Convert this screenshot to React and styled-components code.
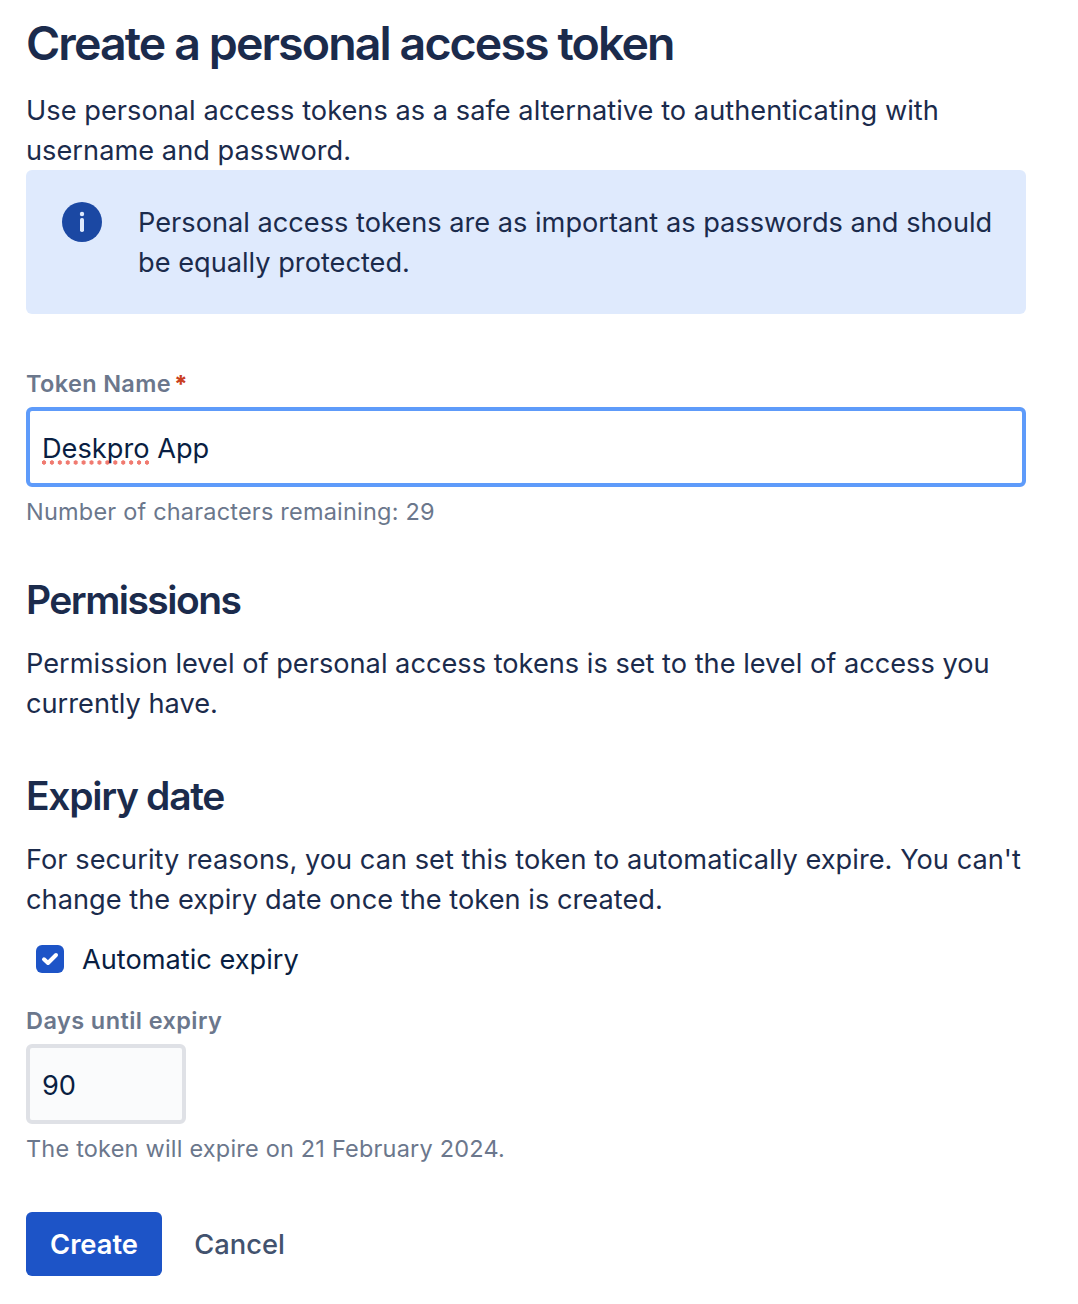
import React from "react";
import styled, { createGlobalStyle } from "styled-components";

const GlobalStyle = createGlobalStyle`
  * { box-sizing: border-box; }
  body {
    margin: 0;
    background: #ffffff;
    color: #1b2b4c;
    font-family: Inter, "Liberation Sans", sans-serif;
    -webkit-font-smoothing: antialiased;
  }
`;

const Page = styled.main`
  width: 1078px;
  min-height: 1304px;
  padding: 15px 26px 28px;
`;

const Form = styled.form`
  width: 1000px;
  display: flex;
  flex-direction: column;
`;

const Title = styled.h1`
  margin: 0 0 19px;
  font-size: 46.5px;
  line-height: 56px;
  font-weight: 600;
  letter-spacing: -1.9px;
  white-space: nowrap;
`;

const SectionTitle = styled.h2`
  margin: 0 0 19px;
  font-size: 39px;
  line-height: 48px;
  font-weight: 600;
  letter-spacing: ${(p) => p.$spacing}px;
`;

const Text = styled.p`
  margin: 0 0 -1px;
  padding-top: 1px;
  font-size: 27.2px;
  line-height: 40px;
  letter-spacing: ${(p) => p.$spacing ?? 0}px;
  white-space: nowrap;
`;

const Banner = styled.section`
  display: flex;
  gap: 36px;
  height: 144px;
  margin-bottom: 54px;
  padding: 32px 36px;
  border-radius: 6px;
  background: #dfeafd;
`;

const Label = styled.label`
  margin: 0 0 7px;
  font-size: 23.5px;
  line-height: 32px;
  font-weight: 600;
  color: #6b778c;
  letter-spacing: ${(p) => p.$spacing}px;
`;

const Required = styled.span`
  margin-left: 3px;
  color: #ca3f21;
  font-weight: 800;
`;

const Field = styled.div`
  display: flex;
  width: ${(p) => p.$width};
  height: 80px;
  padding: 18px 12px 0;
  border: 4px solid ${(p) => (p.$focused ? "#5e9bfa" : "#dfe1e6")};
  border-radius: 6px;
  background: ${(p) => (p.$focused ? "#ffffff" : "#fafbfc")};
  color: #091e42;
  font-size: 27.2px;
  line-height: 40px;
  white-space: pre;
`;

const Misspelled = styled.span`
  height: 40px;
  background: radial-gradient(circle at 2px 2.5px, #f07a70 1.9px, transparent 2.5px) 0 31px / 7.93px 5px repeat-x;
`;

const Helper = styled.p`
  margin: 9px 0 0;
  font-size: 23.5px;
  line-height: 32px;
  color: #6b778c;
  letter-spacing: 0.2px;
`;

const Section = styled.section`
  margin-top: ${(p) => p.$gap}px;
`;

const CheckboxRow = styled.label`
  display: flex;
  align-items: center;
  gap: 18px;
  height: 40px;
  margin: 20px 0 26px;
  padding-left: 10px;
  color: #091e42;
`;

const Actions = styled.div`
  display: flex;
  margin-top: 47px;
`;

const Button = styled.button`
  width: ${(p) => p.$width}px;
  height: 64px;
  padding: 2px 0 0;
  border: 0;
  border-radius: 6px;
  background: ${(p) => (p.$primary ? "#1d54c7" : "transparent")};
  color: ${(p) => (p.$primary ? "#ffffff" : "#42526e")};
  font: ${(p) => (p.$primary ? 600 : 500)} 27.3px/40px Inter, "Liberation Sans", sans-serif;
`;

const Icon = styled.svg`
  flex: none;
  width: ${(p) => p.$size}px;
  height: ${(p) => p.$size}px;
`;

const InfoIcon = () => (
  <Icon $size={40} viewBox="0 0 40 40" aria-hidden="true">
    <circle cx="20" cy="20" r="20" fill="#1b48a3" />
    <circle cx="20" cy="12" r="2.2" fill="#dfeafd" />
    <rect x="18" y="16" width="4" height="14" rx="1.8" fill="#dfeafd" />
  </Icon>
);

const CheckIcon = () => (
  <Icon $size={28} viewBox="0 0 28 28" aria-hidden="true">
    <rect width="28" height="28" rx="6" fill="#1d54c7" />
    <path d="M8 14.3 L12 18 L20 10" fill="none" stroke="#fff" strokeWidth="4" strokeLinecap="round" strokeLinejoin="round" />
  </Icon>
);

export default function App() {
  return (
    <Page>
      <GlobalStyle />
      <Form>
        <Title>Create a personal access token</Title>
        <Text $spacing={0.03}>
          Use personal access tokens as a safe alternative to authenticating with
          <br />
          username and password.
        </Text>
        <Banner>
          <InfoIcon />
          <Text>
            Personal access tokens are as important as passwords and should
            <br />
            be equally protected.
          </Text>
        </Banner>

        <Label $spacing={0.35}>
          Token Name<Required>*</Required>
        </Label>
        <Field $width="100%" $focused>
          <Misspelled>Deskpro</Misspelled> App
        </Field>
        <Helper>Number of characters remaining: 29</Helper>

        <Section $gap={48}>
          <SectionTitle $spacing={-1.53}>Permissions</SectionTitle>
          <Text>
            Permission level of personal access tokens is set to the level of access you
            <br />
            currently have.
          </Text>
        </Section>

        <Section $gap={49}>
          <SectionTitle $spacing={-1.3}>Expiry date</SectionTitle>
          <Text $spacing={0.03}>
            For security reasons, you can set this token to automatically expire. You can't
            <br />
            change the expiry date once the token is created.
          </Text>
        </Section>

        <CheckboxRow>
          <CheckIcon />
          <Text as="span">Automatic expiry</Text>
        </CheckboxRow>

        <Label $spacing={0.42}>Days until expiry</Label>
        <Field $width="160px">90</Field>
        <Helper>The token will expire on 21 February 2024.</Helper>

        <Actions>
          <Button type="button" $primary $width={136}>Create</Button>
          <Button type="button" $width={155}>Cancel</Button>
        </Actions>
      </Form>
    </Page>
  );
}
